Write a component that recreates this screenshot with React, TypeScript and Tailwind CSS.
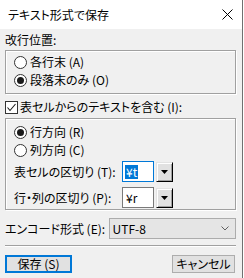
import React, { FunctionComponent } from "react";

// small radio button like the win32 one
const Radio: FunctionComponent<{ checked?: boolean; label: string }> = ({
  checked,
  label,
}) => (
  <div className="flex items-center h-[18px]">
    <span className="w-[13px] h-[13px] rounded-full border border-[#333333] bg-white flex items-center justify-center">
      {checked && <span className="w-[7px] h-[7px] rounded-full bg-[#1a1a1a]"></span>}
    </span>
    <span className="ml-[3px]">{label}</span>
  </div>
);

const DropButton: FunctionComponent = () => (
  <div className="w-[17px] h-[20px] bg-[#e1e1e1] border border-black border-t-[#e3e3e3] border-l-[#e3e3e3] shadow-[inset_1px_1px_0_white,inset_-1px_-1px_0_#a0a0a0] flex items-center justify-center">
    <svg width="7" height="4" viewBox="0 0 7 4">
      <polygon points="0,0 7,0 3.5,4" fill="black" />
    </svg>
  </div>
);

const App: FunctionComponent = () => {
  return (
    <div className="w-[244px] h-[278px] flex bg-white text-[12px] leading-[16px] text-black font-['Noto_Sans_CJK_JP',sans-serif] [font-feature-settings:'palt']">
      <div className="w-[242px] h-full flex flex-col bg-[#f0f0f0]">
        {/* title bar */}
        <div className="h-[29px] bg-white flex items-center justify-between pl-[8px] pr-[9px]">
          <span className="text-[12px]">テキスト形式で保存</span>
          <svg width="11" height="11" viewBox="0 0 11 11">
            <path d="M0.5 0.5 L10.5 10.5 M10.5 0.5 L0.5 10.5" stroke="black" strokeWidth="1" />
          </svg>
        </div>

        <div className="flex flex-col pl-[5px] pr-[6px]">
          <div className="mt-[3px] h-[16px]">改行位置:</div>
          {/* line break group */}
          <div className="mt-[2px] border border-[#a0a0a0] shadow-[inset_1px_1px_0_white,1px_1px_0_white] pt-[2px] pb-[4px] pl-[8px]">
            <Radio label="各行末 (A)" />
            <Radio checked label="段落末のみ (O)" />
          </div>

          <div className="mt-[4px] h-[18px] flex items-center">
            <span className="w-[13px] h-[13px] border border-[#333333] bg-white flex items-center justify-center">
              <svg width="11" height="11" viewBox="0 0 11 11">
                <path d="M1.5 5.5 L4 8.5 L9.5 2" stroke="#1a1a1a" strokeWidth="1.1" fill="none" />
              </svg>
            </span>
            <span className="ml-[2px]">表セルからのテキストを含む (I):</span>
          </div>

          {/* table group */}
          <div className="mt-[2px] h-[92px] border border-[#a0a0a0] shadow-[inset_1px_1px_0_white,1px_1px_0_white] pt-[4px] pl-[8px]">
            <Radio checked label="行方向 (R)" />
            <Radio label="列方向 (C)" />
            <div className="mt-[2px] flex items-center">
              <span className="w-[108px]">表セルの区切り (T):</span>
              <div className="w-[32px] h-[21px] border border-[#0078d7] bg-white flex items-center pl-[2px]">
                <span className="bg-[#0078d7] text-white px-[1px] leading-[14px]">¥t</span>
              </div>
              <div className="ml-[2px]">
                <DropButton />
              </div>
            </div>
            <div className="mt-[5px] flex items-center">
              <span className="w-[108px]">行・列の区切り (P):</span>
              <div className="w-[32px] h-[21px] border border-[#7a7a7a] bg-white flex items-center pl-[3px]">
                ¥r
              </div>
              <div className="ml-[2px]">
                <DropButton />
              </div>
            </div>
          </div>

          {/* encoding */}
          <div className="mt-[8px] flex items-center">
            <span className="w-[105px]">エンコード形式 (E):</span>
            <div className="w-[129px] h-[21px] bg-[#e5e5e5] border border-[#acacac] flex items-center justify-between pl-[3px] pr-[6px]">
              <span>UTF-8</span>
              <svg width="8" height="5" viewBox="0 0 8 5">
                <path d="M0.5 0.5 L4 4 L7.5 0.5" stroke="#606060" strokeWidth="1" fill="none" />
              </svg>
            </div>
          </div>

          <div className="mt-[6px] h-px bg-[#a0a0a0] mr-[0px]"></div>
          <div className="h-px bg-white"></div>

          {/* buttons */}
          <div className="mt-[8px] flex justify-between">
            <button className="w-[67px] h-[18px] border-2 border-[#0078d7] bg-[#e1e1e1] flex items-center justify-center">
              保存 (S)
            </button>
            <button className="w-[63px] h-[18px] mr-[1px] border border-[#adadad] bg-[#e1e1e1] flex items-center justify-center">
              キャンセル
            </button>
          </div>
        </div>
      </div>
      <div className="w-px h-full bg-[#707070]"></div>
      <div className="w-px h-full bg-white"></div>
    </div>
  );
};

export default App;
